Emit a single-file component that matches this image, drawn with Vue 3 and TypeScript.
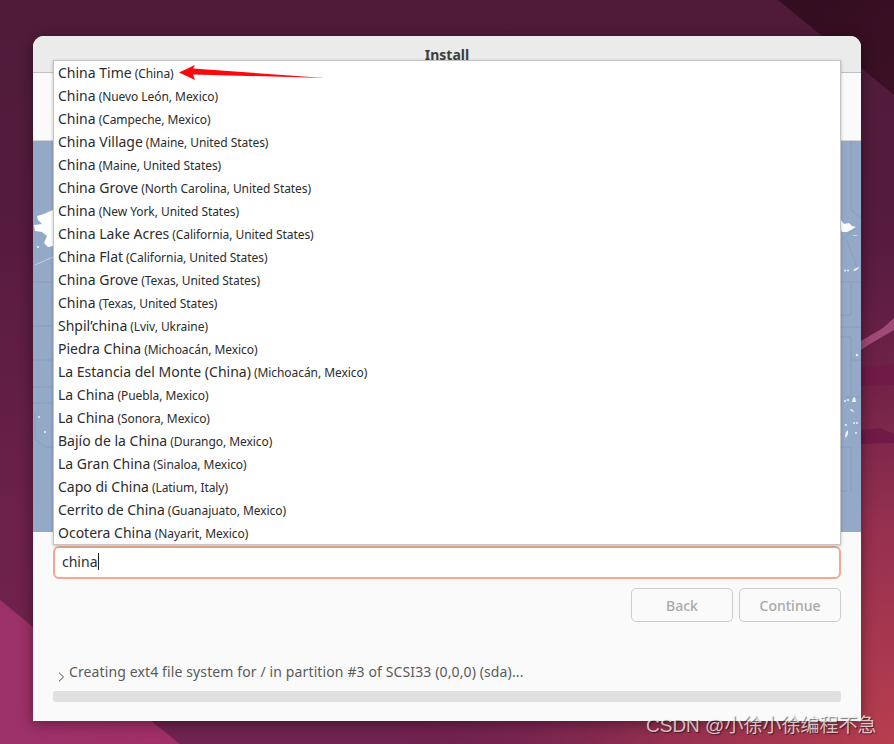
<script setup lang="ts">
interface Place { name: string; region: string }
const places: Place[] = [
  { name: 'China Time', region: '(China)' },
  { name: 'China', region: '(Nuevo León, Mexico)' },
  { name: 'China', region: '(Campeche, Mexico)' },
  { name: 'China Village', region: '(Maine, United States)' },
  { name: 'China', region: '(Maine, United States)' },
  { name: 'China Grove', region: '(North Carolina, United States)' },
  { name: 'China', region: '(New York, United States)' },
  { name: 'China Lake Acres', region: '(California, United States)' },
  { name: 'China Flat', region: '(California, United States)' },
  { name: 'China Grove', region: '(Texas, United States)' },
  { name: 'China', region: '(Texas, United States)' },
  { name: 'Shpil’china', region: '(Lviv, Ukraine)' },
  { name: 'Piedra China', region: '(Michoacán, Mexico)' },
  { name: 'La Estancia del Monte (China)', region: '(Michoacán, Mexico)' },
  { name: 'La China', region: '(Puebla, Mexico)' },
  { name: 'La China', region: '(Sonora, Mexico)' },
  { name: 'Bajío de la China', region: '(Durango, Mexico)' },
  { name: 'La Gran China', region: '(Sinaloa, Mexico)' },
  { name: 'Capo di China', region: '(Latium, Italy)' },
  { name: 'Cerrito de China', region: '(Guanajuato, Mexico)' },
  { name: 'Ocotera China', region: '(Nayarit, Mexico)' },
]
</script>

<template>
  <div class="desktop">
    <svg class="wallpaper" viewBox="0 0 894 744" preserveAspectRatio="none">
      <defs>
        <linearGradient id="base" x1="0" y1="0" x2="0" y2="1">
          <stop offset="0" stop-color="#4f1b39" />
          <stop offset="0.3" stop-color="#561b3d" />
          <stop offset="0.7" stop-color="#6c2149" />
          <stop offset="1" stop-color="#702250" />
        </linearGradient>
        <radialGradient id="glow" gradientUnits="userSpaceOnUse" cx="894" cy="744" r="500">
          <stop offset="0" stop-color="#b83e4e" />
          <stop offset="0.45" stop-color="#9c3250" stop-opacity="0.85" />
          <stop offset="1" stop-color="#6c2149" stop-opacity="0" />
        </radialGradient>
        <linearGradient id="lower" x1="0" y1="0" x2="1" y2="0">
          <stop offset="0" stop-color="#9c3169" />
          <stop offset="1" stop-color="#a02f66" />
        </linearGradient>
        <linearGradient id="dark" x1="0" y1="0" x2="1" y2="1">
          <stop offset="0" stop-color="#330d21" />
          <stop offset="1" stop-color="#3c1025" />
        </linearGradient>
      </defs>
      <rect width="894" height="744" fill="url(#base)" />
      <rect width="894" height="744" fill="url(#glow)" />
      <polygon points="778,0 894,0 894,95" fill="url(#dark)" />
      <polygon points="0,600 33,627 180,744 0,744" fill="url(#lower)" />
      <polygon points="861,341 883,328 894,318 894,330 870,344 861,350" fill="#a04a78" />
      <polygon points="861,368 894,364 894,385 861,386" fill="#701b47" />
      <polygon points="861,430 880,428 894,434 894,443 861,444" fill="#701b47" />
    </svg>

    <main class="window">
      <header class="titlebar">Install</header>
      <div class="heading-space"></div>
      <div class="map">
        <svg class="map-art" viewBox="0 0 828 391" preserveAspectRatio="none">
          <g fill="none" stroke="#8a9dba" stroke-width="1">
            <path d="M0 141H20M0 185H20M0 219H20M0 246H20M0 262H20M2 272V298L12 306H20" />
            <path d="M2 124L20 116" stroke="#c5d0df" />
            <path d="M818 0V69L828 77M808 99L824 86M813 97L824 126" />
            <path d="M808 141H828M818 141V174H808M808 186H828M808 196H818V256M818 219H828M808 256H828M808 306H818V350M808 350H814" />
          </g>
          <g fill="#fdfeff">
            <path d="M4 75L11 73 15 71 20 69V105L15 106 11 102 14 95 9 91 2 90 1 84 9 83 5 79Z" />
            <circle cx="5" cy="106" r="1" />
            <circle cx="6" cy="276" r="1" opacity=".85" />
            <circle cx="12" cy="291" r="1" opacity=".85" />
            <path d="M808 79L811 83 816 82 819 85 823 86 818 89 814 91 809 91 808 89Z" />
            <rect x="820" y="94" width="4" height="1" opacity=".5" />
            <circle cx="812" cy="129.5" r="1" opacity=".85" />
            <circle cx="815" cy="129.5" r="1" opacity=".85" />
            <path d="M820 129L825 126 826 127 822 130Z" opacity=".85" />
            <circle cx="824" cy="214" r="1.2" opacity=".85" />
            <path d="M819 261L820 257 822 256 823 261Z" opacity=".85" />
            <circle cx="812" cy="260" r="1" opacity=".85" />
            <circle cx="815" cy="259" r="1" opacity=".85" />
            <path d="M817 268L820 269 821 271 818 270Z" opacity=".85" />
            <circle cx="821" cy="282" r="1" opacity=".85" />
            <circle cx="824" cy="282" r="1" opacity=".85" />
            <circle cx="813" cy="284" r="1" opacity=".85" />
            <path d="M812 295L813 291 815 289 815 293 813 297Z" opacity=".85" />
            <circle cx="823" cy="292" r="1" opacity=".85" />
          </g>
        </svg>
      </div>
      <div class="controls">
        <div class="entry"><span class="typed">china</span><span class="caret"></span></div>
        <div class="actions">
          <button class="btn" type="button" disabled>Back</button>
          <button class="btn" type="button" disabled>Continue</button>
        </div>
        <div class="status">
          <svg class="chevron" viewBox="0 0 7 10"><path d="M1 .7 5.6 5 1 9.3" fill="none" stroke="#4b4b4b" stroke-width="1" /></svg>
          <span>Creating ext4 file system for / in partition #3 of SCSI33 (0,0,0) (sda)...</span>
        </div>
        <div class="progress"></div>
      </div>

      <ul class="popup">
        <li v-for="(p, i) in places" :key="i" class="row">
          <span class="name">{{ p.name }}</span>
          <span class="region">{{ p.region }}</span>
        </li>
      </ul>
    </main>

    <svg class="arrow" viewBox="0 0 146 16">
      <polygon points="0,7.5 16,0 14,3.5 146,13 14,9.5 16,15" fill="#fb0a0d" />
    </svg>
    <div class="watermark">CSDN @小徐小徐编程不急</div>
  </div>
</template>

<style>
html, body { margin: 0; padding: 0; }
</style>

<style scoped>
.desktop {
  position: relative;
  width: 894px;
  height: 744px;
  overflow: hidden;
  padding: 36px 33px 23px;
  box-sizing: border-box;
  font-family: "Noto Sans", "Open Sans", sans-serif;
}
.wallpaper {
  position: absolute;
  inset: 0;
  width: 100%;
  height: 100%;
}
.window {
  position: relative;
  height: 685px;
  display: flex;
  flex-direction: column;
  background: #fafafa;
  border-radius: 11px 11px 0 0;
  box-shadow: 0 2px 14px rgba(0, 0, 0, 0.42);
  overflow: hidden;
}
.titlebar {
  height: 37px;
  flex: none;
  box-sizing: border-box;
  background: #ebebeb;
  border-bottom: 1px solid #c0c0c0;
  padding-top: 9px;
  font-size: 14px;
  line-height: 20px;
  font-weight: 700;
  color: #3d3d3d;
  text-align: center;
}
.heading-space {
  height: 68px;
  flex: none;
  border-bottom: 1px solid #cfd3da;
  box-sizing: border-box;
}
.map {
  height: 391px;
  flex: none;
  background: #94a9c8;
}
.map-art {
  display: block;
  width: 100%;
  height: 100%;
}
.controls {
  flex: 1;
  padding: 14px 20px 0;
  display: flex;
  flex-direction: column;
}
.entry {
  height: 33px;
  box-sizing: border-box;
  border: 2px solid #f4a88f;
  border-radius: 6px;
  background: #fff;
  display: flex;
  align-items: center;
  padding: 0 0 2px 7px;
  font-size: 14px;
  color: #2d2d2d;
}
.caret {
  width: 1px;
  height: 17px;
  background: #222;
}
.actions {
  display: flex;
  justify-content: flex-end;
  gap: 6px;
  margin-top: 9px;
}
.btn {
  width: 102px;
  height: 34px;
  padding: 0;
  border: 1px solid #cdcdcd;
  border-radius: 5px;
  background: #fafafa;
  color: #a9a9a9;
  font: 500 14px "Noto Sans", "Open Sans", sans-serif;
}
.status {
  display: flex;
  align-items: center;
  margin-top: 39px;
  height: 20px;
  font-size: 14px;
  letter-spacing: 0.12px;
  color: #5a5a5a;
}
.chevron {
  width: 7px;
  height: 10px;
  margin: 11px 4px 0 5px;
  flex: none;
}
.progress {
  height: 11px;
  margin-top: 10px;
  background: #e0e0e0;
  border-radius: 3px;
}
.popup {
  position: absolute;
  left: 20px;
  right: 20px;
  top: 24px;
  margin: 0;
  padding: 0;
  box-sizing: border-box;
  list-style: none;
  background: #fff;
  height: 485px;
  border: 1px solid #c4c4c4;
  box-shadow: 0 1px 3px rgba(0, 0, 0, 0.25);
}
.row {
  height: 23px;
  line-height: 23px;
  padding-left: 4px;
  white-space: nowrap;
  color: #2c2c2c;
}
.name {
  font-size: 14px;
  margin-right: 3px;
}
.region {
  font-size: 12px;
  letter-spacing: -0.06px;
}
.arrow {
  position: absolute;
  left: 179px;
  top: 65px;
  width: 146px;
  height: 16px;
}
.watermark {
  position: absolute;
  left: 646px;
  top: 710px;
  font: 19px "Liberation Sans", "Noto Sans CJK SC", sans-serif;
  color: rgba(255, 255, 255, 0.72);
  text-shadow: 1px 1px 1px rgba(0, 0, 0, 0.55);
  white-space: nowrap;
}
</style>
